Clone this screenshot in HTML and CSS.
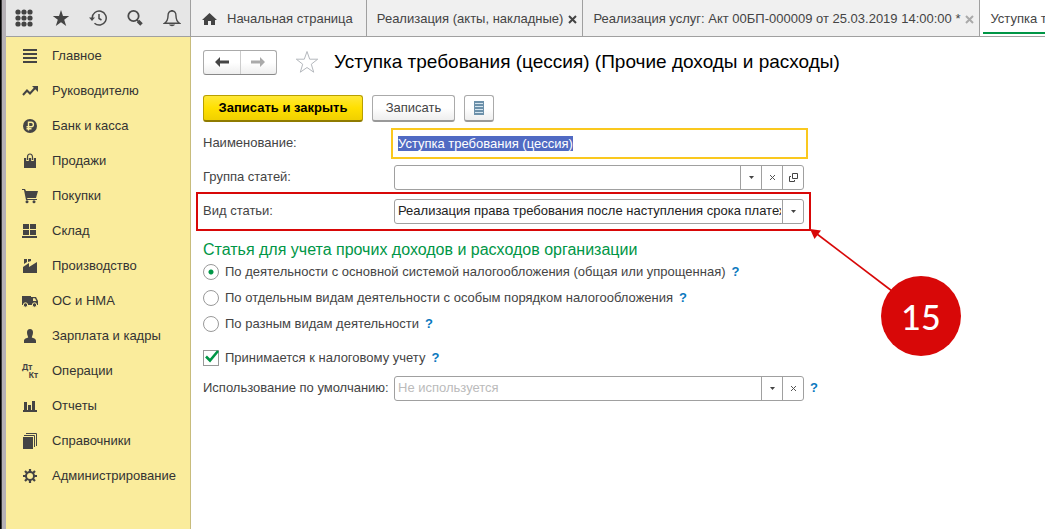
FILE: index.html
```html
<!DOCTYPE html>
<html lang="ru">
<head>
<meta charset="utf-8">
<title>Уступка требования (цессия)</title>
<link rel="stylesheet" href="styles.css">
</head>
<body>
<div class="app">
  <header class="topbar">
    <div class="tools">
      <button class="tool" aria-label="Меню"><svg width="18" height="18" viewBox="0 0 18 18"><g fill="#444"><circle cx="3" cy="3" r="2.6"/><circle cx="9" cy="3" r="2.6"/><circle cx="15" cy="3" r="2.6"/><circle cx="3" cy="9" r="2.6"/><circle cx="9" cy="9" r="2.6"/><circle cx="15" cy="9" r="2.6"/><circle cx="3" cy="15" r="2.6"/><circle cx="9" cy="15" r="2.6"/><circle cx="15" cy="15" r="2.6"/></g></svg></button>
      <button class="tool" aria-label="Избранное"><svg width="18" height="18" viewBox="0 0 18 18"><path fill="#444" d="M9 1l2 6h6.200l-5 3.700 2 6.300L9 13.200 3.800 17l2-6.300-5-3.700H7z"/></svg></button>
      <button class="tool" aria-label="История"><svg width="18" height="18" viewBox="0 0 18 18" fill="none" stroke="#4a4a4a" stroke-width="1.500"><path d="M3.200 9A7 7 0 1 1 5.500 14.200"/><path d="M10 5v4.500l2.500 1.500"/><path d="M0 8.500h6L3 12z" fill="#4a4a4a" stroke="none"/></svg></button>
      <button class="tool" aria-label="Поиск"><svg width="18" height="18" viewBox="0 0 18 18" fill="none" stroke="#4a4a4a"><circle cx="7.500" cy="7" r="5.200" stroke-width="1.800"/><path d="M11 11l2 2" stroke-width="1.500"/><path d="M12 12l3.500 3.500" stroke-width="3.600"/></svg></button>
      <button class="tool" aria-label="Уведомления"><svg width="18" height="18" viewBox="0 0 18 18"><path d="M9 2C6 2 5 4 5 7c0 4-1 5.500-3.500 7.300h15C14 12.500 13 11 13 7c0-3-1-5-4-5z" fill="none" stroke="#4a4a4a" stroke-width="1.400"/><path d="M8 2V1h2v1M6 15.500h6c-1 2.300-5 2.300-6 0z" fill="#4a4a4a"/></svg></button>
    </div>
    <nav class="tabs">
      <div class="tab tab-home"><svg width="15" height="12" viewBox="0 0 15 12"><path fill="#444" d="M7.500 0L0 7h2v5h4V8h3v4h4V7h2z"/></svg><a href="#">Начальная страница</a></div>
      <div class="tab"><a href="#">Реализация (акты, накладные)</a><button class="close" aria-label="Закрыть"><svg width="9" height="9" viewBox="0 0 9 9"><path d="M1 1l7 7M8 1L1 8" stroke="#444" stroke-width="2"/></svg></button></div>
      <div class="tab"><a href="#">Реализация услуг: Акт 00БП-000009 от 25.03.2019 14:00:00 *</a><button class="close" aria-label="Закрыть"><svg width="9" height="9" viewBox="0 0 9 9"><path d="M1 1l7 7M8 1L1 8" stroke="#aaa" stroke-width="2"/></svg></button></div>
      <div class="tab tab-active"><a href="#">Уступка требования (цессия)</a></div>
    </nav>
  </header>

  <nav class="sidebar">
    <a class="item" href="#"><svg width="16" height="16" viewBox="0 0 16 16"><path fill="#444" d="M1 1h14v2H1zM1 5h14v2H1zM1 9h14v2H1zM1 13h14v2H1z"/></svg>Главное</a>
    <a class="item" href="#"><svg width="16" height="16" viewBox="0 0 16 16"><path d="M1 12l4-4.500 3 3L13 5" fill="none" stroke="#444" stroke-width="2"/><path d="M10 3h6v6z" fill="#444"/></svg>Руководителю</a>
    <a class="item" href="#"><svg width="16" height="16" viewBox="0 0 16 16"><circle cx="8" cy="8" r="7" fill="#444"/><path d="M6.500 12.500V4.300h2.700a2.200 2.200 0 0 1 0 4.400H4.500M4.500 10.700h5" fill="none" stroke="#faec9c" stroke-width="1.400"/></svg>Банк и касса</a>
    <a class="item" href="#"><svg width="16" height="16" viewBox="0 0 16 16"><path d="M2 5h12v10H2z" fill="#444"/><path d="M5.500 8V4a2.500 3 0 0 1 5 0v4" fill="none" stroke="#faec9c" stroke-width="2.600"/><path d="M5.500 7V4a2.500 3 0 0 1 5 0v3" fill="none" stroke="#444" stroke-width="1.200"/></svg>Продажи</a>
    <a class="item" href="#"><svg width="16" height="16" viewBox="0 0 16 16"><path d="M0 1h3l1 2h12l-2 7H5l.5 1H15v1H4L2 2H0z" fill="#444"/><circle cx="5" cy="13.700" r="1.500" fill="#444"/><circle cx="12" cy="13.700" r="1.500" fill="#444"/></svg>Покупки</a>
    <a class="item" href="#"><svg width="16" height="16" viewBox="0 0 16 16"><path fill="#444" d="M1 1h6v5H1zM8 1h6v5H8zM1 7h6v5H1zM8 7h6v5H8zM0 13h15v2H0z"/></svg>Склад</a>
    <a class="item" href="#"><svg width="16" height="16" viewBox="0 0 16 16"><path fill="#444" d="M1 15V9l6-4v4l8-5v11zM2 1h3v3L2 6zM6 1h3v2L6 4z"/></svg>Производство</a>
    <a class="item" href="#"><svg width="16" height="16" viewBox="0 0 16 16"><path fill="#444" fill-rule="evenodd" d="M0 3h9v9H0zM9 4h5l2 4v4H9zm2 1.300V8h3.500L13 5.300z"/><circle cx="3.500" cy="12" r="2.200" fill="#444" stroke="#faec9c"/><circle cx="12.500" cy="12" r="2.200" fill="#444" stroke="#faec9c"/></svg>ОС и НМА</a>
    <a class="item" href="#"><svg width="16" height="16" viewBox="0 0 16 16"><path fill="#444" d="M8 1c2 0 3 1.300 3 3.500C11 7 9.800 8.500 9.800 9.500c1.500.8 4.200.8 4.200 3.500v2H2v-2c0-2.700 2.700-2.700 4.200-3.500C6.200 8.500 5 7 5 4.500 5 2.300 6 1 8 1z"/></svg>Зарплата и кадры</a>
    <a class="item" href="#"><span class="icon-text"><span>Дт</span><span>Кт</span></span>Операции</a>
    <a class="item" href="#"><svg width="16" height="16" viewBox="0 0 16 16"><path fill="#444" d="M1 12h14v2H1zM2 4h3v8H2zM6 7h3v5H6zM10 3h3v9h-3z"/></svg>Отчеты</a>
    <a class="item" href="#"><svg width="16" height="16" viewBox="0 0 16 16"><path fill="#444" d="M1 4h10v12H1z"/><path d="M2 2.500h10.500V14M4 .500h10.500V13" fill="none" stroke="#444"/></svg>Справочники</a>
    <a class="item" href="#"><svg width="16" height="16" viewBox="0 0 16 16" fill="none" stroke="#444"><circle cx="8" cy="8" r="4" stroke-width="2"/><path d="M8 1v3M8 12v3M1 8h3M12 8h3M3 3l2.200 2.200M10.800 10.800L13 13M3 13l2.200-2.200M10.800 5.200L13 3" stroke-width="2.200"/></svg>Администрирование</a>
  </nav>

  <main class="main">
    <div class="heading">
      <div class="history">
        <button aria-label="Назад"><svg width="14" height="10" viewBox="0 0 14 10"><path fill="#444" d="M0 5l5-5v3.500h9v3H5V10z"/></svg></button>
        <button aria-label="Вперед"><svg width="14" height="10" viewBox="0 0 14 10"><path fill="#aaa" d="M14 5L9 0v3.500H0v3h9V10z"/></svg></button>
      </div>
      <button class="favorite" aria-label="Добавить в избранное"><svg width="24" height="24" viewBox="0 0 24 24"><path d="M12 1.500l2.700 7.700h8l-6.400 5 2.400 8L12 17.500l-6.700 4.700 2.400-8-6.400-5h8z" fill="#fff" stroke="#b4b8bd"/></svg></button>
      <h1>Уступка требования (цессия) (Прочие доходы и расходы)</h1>
    </div>

    <div class="commands">
      <button class="btn btn-primary">Записать и закрыть</button>
      <button class="btn btn-save">Записать</button>
      <button class="btn btn-list" aria-label="Список"><svg width="10" height="14" viewBox="0 0 10 14"><path fill="#6d91aa" d="M0 0h10v14H0z"/><path d="M1 2.500h8M1 5.500h8M1 8.500h8M1 11.500h8" stroke="#d5e5ef"/></svg></button>
    </div>

    <form class="form">
      <div class="row row-name">
        <label for="name">Наименование:</label>
        <input id="name" class="name" type="text" value="Уступка требования (цессия)" autocomplete="off" spellcheck="false" autofocus>
      </div>
      <div class="row">
        <label for="group">Группа статей:</label>
        <div class="field">
          <input id="group" type="text">
          <button type="button" aria-label="Выбрать"><svg width="5" height="3" viewBox="0 0 5 3"><path fill="#444" d="M0 0h5L2.500 3z"/></svg></button>
          <button type="button" aria-label="Очистить"><svg width="7" height="7" viewBox="0 0 7 7"><path d="M1 1l5 5M6 1L1 6" stroke="#555"/></svg></button>
          <button type="button" aria-label="Открыть"><svg width="9" height="9" viewBox="0 0 9 9" fill="none" stroke="#444"><path d="M3.500.500h5v5h-5zM2 3.500H.500v5h5V7"/></svg></button>
        </div>
      </div>
      <div class="row row-kind">
        <label for="kind">Вид статьи:</label>
        <div class="field field-select">
          <select id="kind"><option>Реализация права требования после наступления срока платежа</option></select>
          <span class="arrow"><svg width="5" height="3" viewBox="0 0 5 3"><path fill="#444" d="M0 0h5L2.500 3z"/></svg></span>
        </div>
        <div class="callout">
          <svg class="pointer" width="84" height="66" viewBox="0 0 84 66"><path d="M7 5l75 57" stroke="#d80808" stroke-width="1.600"/><path d="M0 0l11 1.500-6.500 8.500z" fill="#d80808"/></svg>
          <span class="step">15</span>
        </div>
      </div>

      <fieldset>
        <legend>Статья для учета прочих доходов и расходов организации</legend>
        <div class="option"><input type="radio" name="act" id="a1" checked><label for="a1">По деятельности с основной системой налогообложения (общая или упрощенная)</label><a class="help" href="#">?</a></div>
        <div class="option"><input type="radio" name="act" id="a2"><label for="a2">По отдельным видам деятельности с особым порядком налогообложения</label><a class="help" href="#">?</a></div>
        <div class="option"><input type="radio" name="act" id="a3"><label for="a3">По разным видам деятельности</label><a class="help" href="#">?</a></div>
      </fieldset>

      <div class="option option-tax"><span class="check"><input type="checkbox" id="tax" checked><svg width="14" height="13" viewBox="0 0 14 13"><path d="M1 6.500l4 4L13 1" fill="none" stroke="#009646" stroke-width="2.600"/></svg></span><label for="tax">Принимается к налоговому учету</label><a class="help" href="#">?</a></div>

      <div class="row row-usage">
        <label for="usage">Использование по умолчанию:</label>
        <div class="field">
          <input id="usage" type="text" placeholder="Не используется">
          <button type="button" aria-label="Выбрать"><svg width="5" height="3" viewBox="0 0 5 3"><path fill="#444" d="M0 0h5L2.500 3z"/></svg></button>
          <button type="button" aria-label="Очистить"><svg width="7" height="7" viewBox="0 0 7 7"><path d="M1 1l5 5M6 1L1 6" stroke="#555"/></svg></button>
        </div>
        <a class="help" href="#">?</a>
      </div>
    </form>
  </main>
</div>
<script src="script.js"></script>
</body>
</html>
```
FILE: styles.css
```css
* { box-sizing: border-box; }

body {
  margin: 0;
  font: 13px/16px "Liberation Sans", Arial, sans-serif;
  color: #444;
  background: #fff;
}

button, input, select { font: inherit; color: inherit; margin: 0; }
button { padding: 0; border: 0; background: none; display: flex; align-items: center; justify-content: center; }
a { color: inherit; text-decoration: none; }
svg { display: block; flex: none; }

.app {
  min-height: 100vh;
  display: grid;
  grid-template-columns: 185px minmax(0, 1fr);
  grid-template-rows: auto 1fr;
  padding-left: 6px;
  background: linear-gradient(to right, #000 1px, #777 2px, #b5b0b5 2px, #b5b0b5 6px, #fff 6px);
}

/* Top bar */
.topbar {
  grid-column: 1 / -1;
  display: grid;
  grid-template-columns: 185px minmax(0, 1fr);
  height: 37px;
  border-bottom: 1px solid #a0a0a0;
  background: #f0f0f0;
}
.tools {
  display: flex;
  align-items: center;
  justify-content: space-between;
  padding: 0 9px;
  background: #e6e6e6;
  border-right: 1px solid #a0a0a0;
}
.tabs { display: flex; overflow: hidden; white-space: nowrap; }
.tab {
  display: flex;
  align-items: center;
  gap: 5px;
  flex: none;
  padding: 2px 5px 0 10px;
  border-right: 1px solid #a0a0a0;
}
.tab-home { gap: 10px; padding-right: 13px; padding-left: 11px; }
.tab-active {
  padding-left: 10px;
  background: linear-gradient(#009646, #009646) 3px 32px / 100% 2px no-repeat #fff;
}

/* Sections */
.sidebar {
  padding-top: 1px;
  background: #faec9c;
  border-right: 1px solid #c8bc7c;
}
.item {
  display: flex;
  align-items: center;
  gap: 14px;
  height: 35px;
  padding-left: 16px;
  color: #333;
}
.icon-text {
  display: flex;
  flex-direction: column;
  width: 16px;
  font: bold 8px/8px "Noto Sans", sans-serif;
  color: #444;
}
.icon-text span:last-child { text-align: right; }

/* Form area */
.main { padding: 12px 12px 24px; min-width: 0; }
.heading { display: flex; align-items: center; height: 26px; }
.heading h1 { margin: 0 0 0 15px; font-size: 19px; line-height: 26px; font-weight: normal; color: #000; white-space: nowrap; }
.history {
  display: flex;
  width: 74px;
  height: 25px;
  border: 1px solid #aaa;
  border-bottom-color: #888;
  border-radius: 3px;
  background: linear-gradient(#fff 50%, #eee);
}
.history button { flex: 1; }
.history button + button { border-left: 1px solid #ccc; }
.favorite { margin-left: 18px; }

.commands { display: flex; gap: 9px; margin-top: 20px; }
.btn {
  height: 27px;
  border: 1px solid #aaa;
  border-bottom: 2px solid #999;
  border-radius: 3px;
  background: linear-gradient(#fff 50%, #eee);
}
.btn-primary {
  width: 160px;
  font-weight: bold;
  color: #000;
  border-color: #b89f00;
  border-bottom-color: #8f7b00;
  background: linear-gradient(#ffe838, #ffe000 50%, #f0d000);
}
.btn-save { width: 83px; }
.btn-list { width: 30px; }

.form { margin-top: 4px; }
.row { position: relative; display: flex; align-items: center; height: 34px; }
.row > label { width: 191px; flex: none; white-space: nowrap; }
.row-name > label { width: 188px; }
.row-usage { height: 26px; }
.name {
  width: 417px;
  height: 31px;
  padding: 0 5px;
  border: 2px solid #fac81e;
  outline: 0;
  color: #222;
}
.name::selection { color: #fff; background: rgba(78, 104, 194, .99); }

.field {
  display: flex;
  width: 410px;
  height: 25px;
  border: 1px solid #a0a0a0;
  border-radius: 3px;
  overflow: hidden;
  background: #fff;
}
.field input, .field select {
  flex: 1;
  min-width: 0;
  padding: 0 3px;
  border: 0;
  outline: 0;
  background: none;
  color: #222;
}
.field select { appearance: none; padding: 0; margin: 0 1px 0 3px; }
.field input::placeholder { color: #bbb; }
.field button, .arrow {
  width: 21px;
  flex: none;
  border-left: 1px solid #a0a0a0;
}
.arrow { display: flex; align-items: center; justify-content: center; }

/* Highlighted row with its numbered marker */
.callout {
  position: absolute;
  left: -7px;
  top: -2px;
  width: 615px;
  height: 39px;
  border: 2px solid #d80808;
  pointer-events: none;
}
.pointer { position: absolute; left: 612px; top: 35px; }
.step {
  position: absolute;
  left: 683px;
  top: 82px;
  width: 80px;
  height: 80px;
  border-radius: 50%;
  background: #d80808;
  color: #fff;
  font: 500 34px/82px Lato, sans-serif;
  text-align: center;
}

fieldset { margin: 13px 0 0; padding: 0; border: 0; }
legend { padding: 0; font-size: 16px; line-height: 18px; color: #009646; white-space: nowrap; }
.option { display: flex; align-items: center; height: 26px; white-space: nowrap; }
.option label { margin-left: 6px; }
.option input {
  appearance: none;
  width: 16px;
  height: 16px;
  border: 1px solid #999;
  background: #fff;
}
.option input[type="radio"] { border-radius: 50%; }
.option input[type="radio"]:checked { background: radial-gradient(circle, #009646 2px, #fff 3px); }
.option-tax { margin: 8px 0 4px; }
.check { position: relative; display: flex; }
.check svg { position: absolute; left: 2px; top: 0; pointer-events: none; }
.help { margin-left: 6px; font-weight: bold; color: #0a78be; }
```
FILE: script.js
```js
const nameField = document.getElementById("name");
nameField.focus();
nameField.select();
```
